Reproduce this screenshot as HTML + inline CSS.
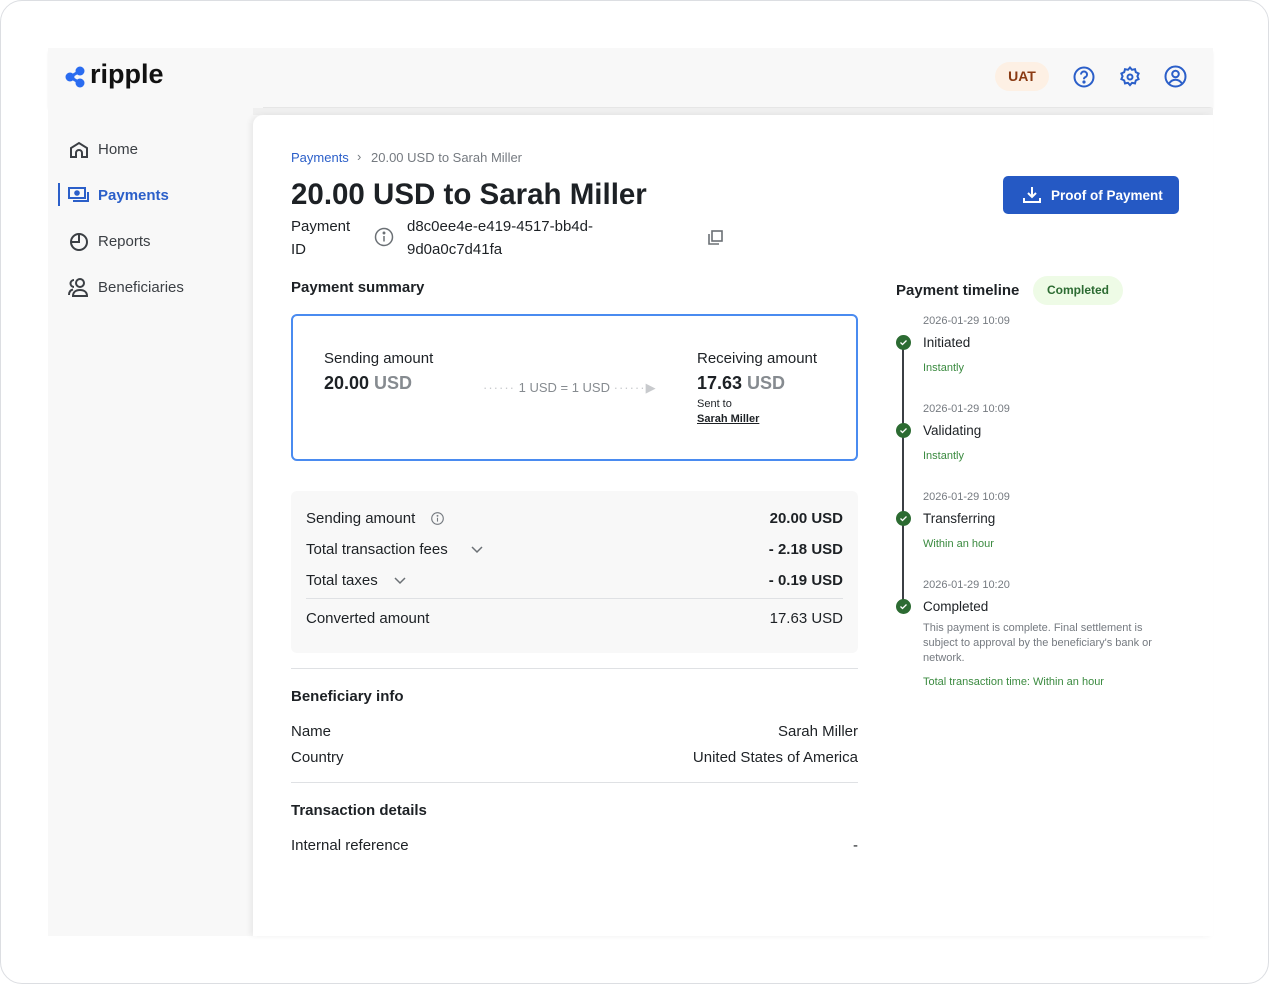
<!DOCTYPE html>
<html><head><meta charset="utf-8"><style>
*{margin:0;padding:0;box-sizing:border-box}
body{width:1269px;height:984px;background:#fff;font-family:"Liberation Sans",sans-serif;color:#1d2125;position:relative;overflow:hidden}
.frame{position:absolute;left:0;top:0;width:1269px;height:984px;border:1.5px solid #dcdee2;border-radius:22px}
.a{position:absolute;white-space:nowrap}
.hdr{position:absolute;left:48px;top:48px;width:1165px;height:59px;background:#f8f8f8;box-shadow:0 3px 3px -1px rgba(0,0,0,.12)}
.side{position:absolute;left:48px;top:107px;width:215px;height:829px;background:#f8f8f8}
.strip{position:absolute;left:253px;top:108px;width:960px;height:7px;background:#efefef}
.main{position:absolute;left:253px;top:115px;width:960px;height:821px;background:#fff;border-top-left-radius:10px;box-shadow:-3px 0 6px rgba(0,0,0,.06)}
.nav{font-size:15px;color:#3b3f44}
.g{color:#757a80}
.hr{position:absolute;height:1px;background:#dfe1e4}
.dot{position:absolute;left:896px;width:15px;height:15px;border-radius:50%;background:#2c6b32}
.dot svg{position:absolute;left:3px;top:3px}
</style></head><body>
<div class="frame"></div>
<div class="hdr"></div>
<div class="side"></div>
<div class="strip"></div>
<div class="main"></div>

<!-- logo -->
<svg class="a" style="left:65px;top:66px" width="24" height="22" viewBox="0 0 24 22"><circle cx="5" cy="11" r="4.5" fill="#2a6cf0"/><circle cx="15" cy="5" r="4.5" fill="#2a6cf0"/><circle cx="15" cy="17" r="4.5" fill="#2a6cf0"/><path d="M5 11L15 5M5 11L15 17" stroke="#2a6cf0" stroke-width="3"/></svg>
<div class="a" style="left:90px;top:59px;font-size:27px;font-weight:bold;color:#111">ripple</div>

<div class="a" style="left:995px;top:62px;width:54px;height:29px;border-radius:15px;background:#fdf0e4;color:#8a3a12;font-size:14px;font-weight:bold;text-align:center;line-height:29px">UAT</div>
<svg class="a" style="left:1073px;top:66px" width="22" height="22" viewBox="0 0 22 22" fill="none" stroke="#2b5fc9" stroke-width="2"><circle cx="11" cy="11" r="9.5"/><path d="M8 8.5a3 3 0 1 1 4 2.8c-.8.4-1 1-1 2"/><circle cx="11" cy="16" r=".6" fill="#2b5fc9"/></svg>
<svg class="a" style="left:1119px;top:66px" width="22" height="22" viewBox="0 0 22 22" fill="none" stroke="#2b5fc9" stroke-width="2"><path d="M11 1.5l2 2.3 3-.6.8 3 2.8 1.3-1.2 2.8 1.2 2.8-2.8 1.3-.8 3-3-.6-2 2.3-2-2.3-3 .6-.8-3-2.8-1.3 1.2-2.8-1.2-2.8 2.8-1.3.8-3 3 .6z"/><circle cx="11" cy="11" r="2.5"/></svg>
<svg class="a" style="left:1164px;top:65px" width="23" height="23" viewBox="0 0 23 23" fill="none" stroke="#2b5fc9" stroke-width="2"><circle cx="11.5" cy="11.5" r="10"/><circle cx="11.5" cy="9" r="3.3"/><path d="M5 18.5c2-3 4-3.8 6.5-3.8s4.5.8 6.5 3.8"/></svg>

<!-- sidebar -->
<svg class="a" style="left:69px;top:141px" width="20" height="18" viewBox="0 0 20 18" fill="none" stroke="#3b3f44" stroke-width="2"><path d="M2 16V7l8-5 8 5v9h-5v-4a3 3 0 0 0-6 0v4z"/></svg>
<div class="a nav" style="left:98px;top:141px">Home</div>
<div class="a" style="left:58px;top:183px;width:2px;height:23px;background:#2b5fc9"></div>
<svg class="a" style="left:68px;top:186px" width="22" height="18" viewBox="0 0 22 18" fill="none" stroke="#2b5fc9" stroke-width="2"><rect x="1" y="2" width="16" height="10"/><circle cx="9" cy="7" r="1.8" fill="#2b5fc9"/><path d="M20 6v9H5"/></svg>
<div class="a nav" style="left:98px;top:187px;color:#2b5fc9;font-weight:bold">Payments</div>
<svg class="a" style="left:69px;top:232px" width="20" height="20" viewBox="0 0 20 20" fill="none" stroke="#3b3f44" stroke-width="2"><circle cx="10" cy="10" r="8"/><path d="M10 2v8H2"/></svg>
<div class="a nav" style="left:98px;top:233px">Reports</div>
<svg class="a" style="left:67px;top:277px" width="24" height="20" viewBox="0 0 24 20" fill="none" stroke="#3b3f44" stroke-width="2"><circle cx="13" cy="6" r="4"/><path d="M6 19c0-4 3-6 7-6s7 2 7 6z"/><path d="M7 3a3.5 3.5 0 0 0 0 7M2 18c0-3 1.5-5 4-5.5"/></svg>
<div class="a nav" style="left:98px;top:279px">Beneficiaries</div>

<!-- main -->
<div class="a" style="left:291px;top:150px;font-size:13px;color:#2b5fc9">Payments</div>
<div class="a" style="left:357px;top:149px;font-size:13px;color:#757a80">›</div>
<div class="a" style="left:371px;top:150px;font-size:13px;color:#757a80">20.00 USD to Sarah Miller</div>
<div class="a" style="left:291px;top:178px;font-size:29.5px;font-weight:bold;color:#1d2125">20.00 USD to Sarah Miller</div>
<div class="a" style="left:291px;top:215px;font-size:15px;line-height:23px">Payment<br>ID</div>
<svg class="a" style="left:374px;top:227px" width="20" height="20" viewBox="0 0 20 20" fill="none" stroke="#6b7075" stroke-width="1.5"><circle cx="10" cy="10" r="8.5"/><path d="M10 9v5.5"/><circle cx="10" cy="6" r=".7" fill="#6b7075"/></svg>
<div class="a" style="left:407px;top:215px;font-size:15px;line-height:23px">d8c0ee4e-e419-4517-bb4d-<br>9d0a0c7d41fa</div>
<svg class="a" style="left:707px;top:229px" width="17" height="17" viewBox="0 0 17 17" fill="none" stroke="#6b7075" stroke-width="1.6"><rect x="5" y="2" width="10" height="10"/><path d="M2 5v10h10"/></svg>

<div class="a" style="left:1003px;top:176px;width:176px;height:38px;border-radius:5px;background:#2559c4"></div>
<svg class="a" style="left:1022px;top:186px" width="20" height="18" viewBox="0 0 20 18" fill="none" stroke="#fff" stroke-width="2"><path d="M10 1v10M6 7l4 4 4-4M2 12v4h16v-4"/></svg>
<div class="a" style="left:1051px;top:188px;font-size:13.5px;font-weight:bold;color:#fff">Proof of Payment</div>

<div class="a" style="left:291px;top:279px;font-size:15px;font-weight:bold">Payment summary</div>
<div class="a" style="left:291px;top:314px;width:567px;height:147px;border:2.5px solid #4a8bf0;border-radius:6px"></div>
<div class="a" style="left:324px;top:350px;font-size:15px">Sending amount</div>
<div class="a" style="left:324px;top:373px;font-size:18px;font-weight:bold">20.00 <span style="color:#868b90">USD</span></div>
<div class="a" style="left:483px;top:380px;font-size:13px;color:#868b90"><span style="letter-spacing:1px;color:#c8cacd">······</span> 1 USD = 1 USD <span style="letter-spacing:1px;color:#c8cacd">······▶</span></div>
<div class="a" style="left:697px;top:350px;font-size:15px">Receiving amount</div>
<div class="a" style="left:697px;top:373px;font-size:18px;font-weight:bold">17.63 <span style="color:#868b90">USD</span></div>
<div class="a" style="left:697px;top:398px;font-size:11px">Sent to</div>
<div class="a" style="left:697px;top:413px;font-size:11px;font-weight:bold;text-decoration:underline">Sarah Miller</div>

<div class="a" style="left:291px;top:491px;width:567px;height:162px;background:#f8f8f8;border-radius:6px"></div>
<div class="a" style="left:306px;top:510px;font-size:15px">Sending amount</div>
<svg class="a" style="left:431px;top:512px" width="13" height="13" viewBox="0 0 13 13" fill="none" stroke="#757a80" stroke-width="1.1"><circle cx="6.5" cy="6.5" r="5.8"/><path d="M6.5 5.8v3.8"/><circle cx="6.5" cy="3.8" r=".4"/></svg>
<div class="a" style="left:306px;top:541px;font-size:15px">Total transaction fees</div>
<svg class="a" style="left:470px;top:545px" width="14" height="10" viewBox="0 0 14 10" fill="none" stroke="#6b7075" stroke-width="1.5"><path d="M2 2l5 5 5-5"/></svg>
<div class="a" style="left:306px;top:572px;font-size:15px">Total taxes</div>
<svg class="a" style="left:393px;top:576px" width="14" height="10" viewBox="0 0 14 10" fill="none" stroke="#6b7075" stroke-width="1.5"><path d="M2 2l5 5 5-5"/></svg>
<div class="a" style="right:426px;top:510px;font-size:15px;font-weight:bold">20.00 USD</div>
<div class="a" style="right:426px;top:541px;font-size:15px;font-weight:bold">- 2.18 USD</div>
<div class="a" style="right:426px;top:572px;font-size:15px;font-weight:bold">- 0.19 USD</div>
<div class="hr" style="left:306px;top:598px;width:537px"></div>
<div class="a" style="left:306px;top:610px;font-size:15px">Converted amount</div>
<div class="a" style="right:426px;top:610px;font-size:15px">17.63 USD</div>

<div class="hr" style="left:291px;top:668px;width:567px"></div>
<div class="a" style="left:291px;top:688px;font-size:15px;font-weight:bold">Beneficiary info</div>
<div class="a" style="left:291px;top:723px;font-size:15px">Name</div>
<div class="a" style="right:411px;top:723px;font-size:15px">Sarah Miller</div>
<div class="a" style="left:291px;top:749px;font-size:15px">Country</div>
<div class="a" style="right:411px;top:749px;font-size:15px">United States of America</div>
<div class="hr" style="left:291px;top:782px;width:567px"></div>
<div class="a" style="left:291px;top:802px;font-size:15px;font-weight:bold">Transaction details</div>
<div class="a" style="left:291px;top:837px;font-size:15px">Internal reference</div>
<div class="a" style="right:411px;top:837px;font-size:15px">-</div>

<!-- timeline -->
<div class="a" style="left:896px;top:282px;font-size:15px;font-weight:bold">Payment timeline</div>
<div class="a" style="left:1033px;top:276px;width:90px;height:29px;border-radius:15px;background:#eefbe6;color:#2c6b32;font-size:12px;font-weight:bold;text-align:center;line-height:29px">Completed</div>
<div class="a" style="left:902px;top:345px;width:2px;height:260px;background:#3b3f44"></div>
<div class="dot" style="top:335px"><svg width="9" height="9" viewBox="0 0 9 9" fill="none" stroke="#fff" stroke-width="1.3"><path d="M1.5 4.5l2 2 4-4"/></svg></div>
<div class="dot" style="top:423px"><svg width="9" height="9" viewBox="0 0 9 9" fill="none" stroke="#fff" stroke-width="1.3"><path d="M1.5 4.5l2 2 4-4"/></svg></div>
<div class="dot" style="top:511px"><svg width="9" height="9" viewBox="0 0 9 9" fill="none" stroke="#fff" stroke-width="1.3"><path d="M1.5 4.5l2 2 4-4"/></svg></div>
<div class="dot" style="top:599px"><svg width="9" height="9" viewBox="0 0 9 9" fill="none" stroke="#fff" stroke-width="1.3"><path d="M1.5 4.5l2 2 4-4"/></svg></div>

<div class="a g" style="left:923px;top:315px;font-size:11px">2026-01-29 10:09</div>
<div class="a" style="left:923px;top:335px;font-size:13.5px">Initiated</div>
<div class="a" style="left:923px;top:362px;font-size:11px;color:#3a8a3f">Instantly</div>
<div class="a g" style="left:923px;top:403px;font-size:11px">2026-01-29 10:09</div>
<div class="a" style="left:923px;top:423px;font-size:13.5px">Validating</div>
<div class="a" style="left:923px;top:450px;font-size:11px;color:#3a8a3f">Instantly</div>
<div class="a g" style="left:923px;top:491px;font-size:11px">2026-01-29 10:09</div>
<div class="a" style="left:923px;top:511px;font-size:13.5px">Transferring</div>
<div class="a" style="left:923px;top:538px;font-size:11px;color:#3a8a3f">Within an hour</div>
<div class="a g" style="left:923px;top:579px;font-size:11px">2026-01-29 10:20</div>
<div class="a" style="left:923px;top:599px;font-size:13.5px">Completed</div>
<div class="a g" style="left:923px;top:621px;font-size:11px;line-height:15px">This payment is complete. Final settlement is<br>subject to approval by the beneficiary's bank or<br>network.</div>
<div class="a" style="left:923px;top:676px;font-size:11px;color:#3a8a3f">Total transaction time: Within an hour</div>
</body></html>
